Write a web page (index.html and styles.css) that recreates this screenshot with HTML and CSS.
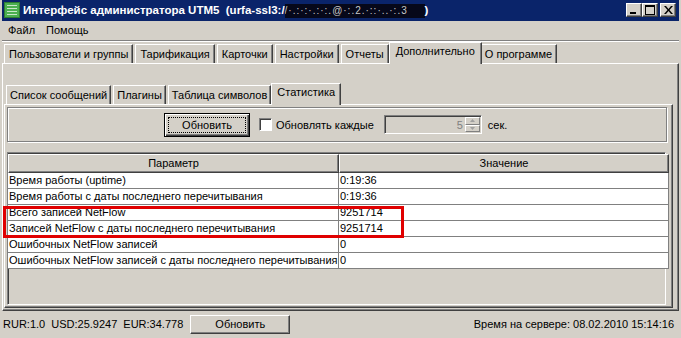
FILE: index.html
```html
<!DOCTYPE html>
<html>
<head>
<meta charset="utf-8">
<link rel="stylesheet" href="styles.css">
</head>
<body>
<div class="win">
  <div class="title">
    <svg class="appicon" width="16" height="16" viewBox="0 0 16 16">
      <rect x="0" y="0" width="16" height="16" fill="#2e7d32"/>
      <rect x="1" y="1" width="14" height="14" fill="#4caf50"/>
      <rect x="3" y="3" width="10" height="1" fill="#c8e6c9"/>
      <rect x="3" y="6" width="10" height="1" fill="#c8e6c9"/>
      <rect x="3" y="9" width="10" height="1" fill="#c8e6c9"/>
      <rect x="3" y="12" width="10" height="1" fill="#c8e6c9"/>
    </svg>
    <span class="ttext">Интерфейс администратора UTM5&nbsp; (urfa-ssl3:/<span class="blur">/·.:·:·.:·:.@·:.2.·::·..·:.3</span>)</span>
    <div class="wbtns">
      <div class="wbtn"><svg width="8" height="8"><rect x="0" y="6" width="6" height="2" fill="#000"/></svg></div>
      <div class="wbtn"><svg width="10" height="10"><rect x="0.5" y="0.5" width="9" height="9" fill="none" stroke="#000"/><rect x="0" y="0" width="10" height="2" fill="#000"/></svg></div>
      <div class="wbtn gap"><svg width="9" height="8"><path d="M0 0L2 0L4.5 3L7 0L9 0L5.5 4L9 8L7 8L4.5 5L2 8L0 8L3.5 4Z" fill="#000"/></svg></div>
    </div>
  </div>
  <div class="menu"><span>Файл</span><span>Помощь</span></div>
  <div class="sep"></div>
  <div class="tabs main">
    <div class="tab">Пользователи и группы</div>
    <div class="tab">Тарификация</div>
    <div class="tab">Карточки</div>
    <div class="tab">Настройки</div>
    <div class="tab">Отчеты</div>
    <div class="tab sel">Дополнительно</div>
    <div class="tab">О программе</div>
  </div>
  <div class="panel outer">
    <div class="tabs inner">
      <div class="tab">Список сообщений</div>
      <div class="tab">Плагины</div>
      <div class="tab">Таблица символов</div>
      <div class="tab sel">Статистика</div>
    </div>
    <div class="panel innerp">
      <div class="toolbar">
        <div class="btn focus"><span>Обновить</span></div>
        <div class="chk"></div>
        <span class="lbl">Обновлять каждые</span>
        <div class="spin"><span class="num">5</span>
          <div class="arrows">
            <div class="arr"><svg width="5" height="3"><path d="M2.5 0L5 3L0 3Z" fill="#a0a0a0"/></svg></div>
            <div class="arr"><svg width="5" height="3"><path d="M0 0L5 0L2.5 3Z" fill="#a0a0a0"/></svg></div>
          </div>
        </div>
        <span class="lbl sec">сек.</span>
      </div>
      <div class="pane">
        <div class="grid">
          <div class="hd">Параметр</div><div class="hd">Значение</div>
          <div class="c">Время работы (uptime)</div><div class="c">0:19:36</div>
          <div class="c">Время работы с даты последнего перечитывания</div><div class="c">0:19:36</div>
          <div class="c">Всего записей NetFlow</div><div class="c">9251714</div>
          <div class="c">Записей NetFlow с даты последнего перечитывания</div><div class="c">9251714</div>
          <div class="c">Ошибочных NetFlow записей</div><div class="c">0</div>
          <div class="c">Ошибочных NetFlow записей с даты последнего перечитывания</div><div class="c">0</div>
        </div>
      </div>
    </div>
  </div>
  <div class="status">
    <span class="rates">RUR:1.0 USD:25.9247 EUR:34.778</span>
    <div class="btn sbtn">Обновить</div>
    <span class="srv">Время на сервере: 08.02.2010 15:14:16</span>
  </div>
  <div class="mark"></div>
</div>
</body>
</html>
```
FILE: styles.css
```css
* { box-sizing: border-box; }
html, body { margin: 0; padding: 0; }
body {
  width: 681px; height: 338px; overflow: hidden;
  background: #d4d0c8;
  font-family: "Liberation Sans", Arial, sans-serif;
  font-size: 11px; color: #000;
}
.win { position: relative; width: 681px; height: 338px; display: flex; flex-direction: column; }
.title {
  height: 21px; margin: 0 2px; padding: 2px 3px 0 2px;
  background: #0a246a; color: #fff; font-weight: bold; font-size: 11.5px;
  display: flex; align-items: flex-start;
}
.appicon { flex: none; margin-right: 3px; }
.ttext { white-space: nowrap; line-height: 16px; }
.blur {
  display: inline-block; width: 140px; height: 14px; vertical-align: middle; overflow: hidden;
  background: #06081a; color: #c8c8c8; font-weight: normal; letter-spacing: 1px; font-size: 10px; line-height: 14px;
}
.wbtns { margin-left: auto; display: flex; margin-top: 1px; }
.wbtn {
  width: 16px; height: 14px; background: #d4d0c8;
  border-top: 1px solid #fff; border-left: 1px solid #fff;
  border-right: 1px solid #404040; border-bottom: 1px solid #404040;
  box-shadow: inset -1px -1px 0 #808080;
  display: flex; align-items: center; justify-content: center;
}
.wbtn.gap { margin-left: 2px; }
.menu { height: 18px; display: flex; align-items: center; padding-left: 8px; gap: 11px; }
.sep { height: 2px; border-top: 1px solid #808080; border-bottom: 1px solid #fff; margin: 1px 2px 0; }
.tabs { display: flex; align-items: flex-end; }
.tabs.main { height: 21px; padding-left: 4px; }
.tab {
  height: 19px; padding: 0 4px; line-height: 18px; white-space: nowrap;
  border-top: 1px solid #fff; border-left: 1px solid #fff;
  border-right: 1px solid #404040; box-shadow: inset -1px 0 0 #808080;
  margin-right: 2px;
}
.tab.sel {
  height: 22px; line-height: 17px; margin: 0 0 -1px -2px; padding: 0 6px 4px; background: #d4d0c8;
  position: relative; z-index: 1;
}
.tab.sel + .tab { margin-left: -2px; }
.panel {
  border-top: 1px solid #fff; border-left: 1px solid #fff;
  border-right: 1px solid #404040; border-bottom: 1px solid #404040;
  box-shadow: inset -1px -1px 0 #808080;
}
.outer { height: 248px; margin: 0 2px; padding: 19px 5px 2px 1px; display: flex; flex-direction: column; }
.tabs.inner { height: 21px; padding-left: 2px; }
.tabs.inner .tab { padding: 0 3px; }
.tabs.inner .tab.sel { padding: 0 5px 4px; }
.innerp { flex: 1; padding: 2px 4px 2px 2px; display: flex; flex-direction: column; }
.toolbar {
  height: 35px; flex: none; border: 1px solid #808080; box-shadow: 1px 1px 0 #fff, inset 1px 1px 0 #fff;
  display: flex; align-items: center; padding-left: 156px; margin: 0 1px 10px 0;
}
.btn {
  background: #d4d0c8; text-align: center;
  border-top: 1px solid #fff; border-left: 1px solid #fff;
  border-right: 1px solid #404040; border-bottom: 1px solid #404040;
  box-shadow: inset -1px -1px 0 #808080;
}
.btn.focus { width: 86px; height: 24px; border: 1px solid #000; box-shadow: inset 1px 1px 0 #fff, inset -1px -1px 0 #404040, inset -2px -2px 0 #808080; padding: 3px; }
.btn.focus span { display: block; height: 16px; line-height: 14px; border: 1px dotted #000; }
.chk { width: 13px; height: 13px; background: #fff; margin-left: 9px; border-top: 1px solid #808080; border-left: 1px solid #808080; border-right: 1px solid #fff; border-bottom: 1px solid #fff; box-shadow: inset 1px 1px 0 #404040; }
.lbl { margin-left: 4px; }
.spin {
  width: 98px; height: 19px; margin-left: 10px; background: #d4d0c8;
  border-top: 1px solid #808080; border-left: 1px solid #808080; border-right: 1px solid #fff; border-bottom: 1px solid #fff;
  box-shadow: inset 1px 1px 0 #404040;
  display: flex; justify-content: flex-end; align-items: center; padding-right: 1px;
}
.num { color: #808080; margin-right: 2px; }
.arrows { width: 15px; height: 15px; display: flex; flex-direction: column; }
.arr { flex: 1; display: flex; align-items: center; justify-content: center; border-top: 1px solid #fff; border-left: 1px solid #fff; border-right: 1px solid #808080; border-bottom: 1px solid #808080; }
.sec { margin-left: 6px; }
.pane {
  flex: 1; margin: 0 2px 0 0;
  border-top: 1px solid #808080; border-left: 1px solid #808080; border-right: 1px solid #fff; border-bottom: 1px solid #fff;
  box-shadow: inset 1px 1px 0 #404040;
  padding: 1px 0 0 0;
}
.grid { display: grid; grid-template-columns: 331px 330px; grid-auto-rows: 16px; grid-template-rows: 19px; }
.grid .hd {
  text-align: center; line-height: 17px;
  border-top: 1px solid #fff; border-left: 1px solid #fff;
  border-right: 1px solid #404040; border-bottom: 1px solid #404040;
  box-shadow: inset -1px -1px 0 #808080; background: #d4d0c8;
}
.grid .c { background: #fff; border-right: 1px solid #808080; border-bottom: 1px solid #808080; padding-left: 1px; line-height: 15px; white-space: nowrap; overflow: hidden; }
.status { height: 26px; display: flex; align-items: center; padding: 0 7px 0 3px; }
.rates { word-spacing: 3px; }
.sbtn { width: 100px; height: 19px; line-height: 16px; margin-left: 7px; }
.srv { margin-left: auto; }
.mark { position: absolute; left: 3px; top: 206px; width: 401px; height: 32px; border: 3px solid #e00000; }
```
